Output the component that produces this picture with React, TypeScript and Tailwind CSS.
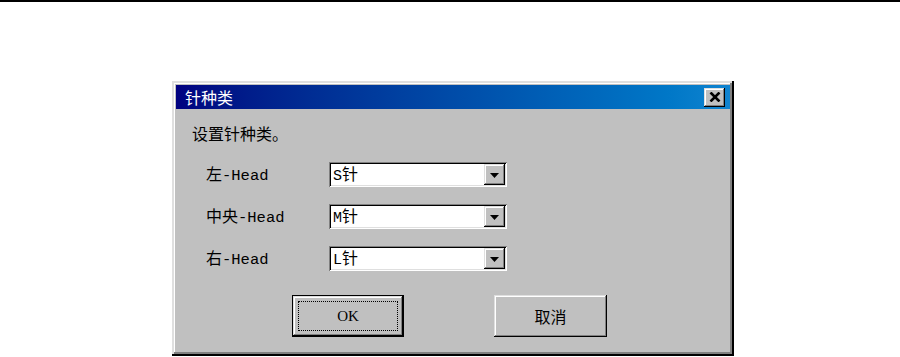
import React from "react";

const CJK = '"Noto Sans CJK SC", "Noto Sans CJK JP", sans-serif';
const MONO = '"Liberation Mono", "Noto Sans CJK SC", monospace';

const raised =
  "shadow-[inset_-1px_-1px_#000000,inset_1px_1px_#dfdfdf,inset_-2px_-2px_#808080,inset_2px_2px_#ffffff]";

function Label({ cjk }: { cjk: string }) {
  return (
    <div className="w-[123px] flex items-baseline text-black">
      <span className="text-[16px] leading-[18px]" style={{ fontFamily: CJK }}>
        {cjk}
      </span>
      <span className="text-[15.5px] leading-[18px]" style={{ fontFamily: MONO }}>
        -Head
      </span>
    </div>
  );
}

function Combo({ letter }: { letter: string }) {
  return (
    <div className="w-[178px] h-[25px] bg-white flex items-center justify-between p-[2px] shadow-[inset_1px_1px_#808080,inset_-1px_-1px_#ffffff,inset_2px_2px_#000000,inset_-2px_-2px_#dfdfdf]">
      <div className="flex items-baseline pl-[2px] text-black">
        <span className="text-[15px] leading-[18px]" style={{ fontFamily: MONO }}>
          {letter}
        </span>
        <span className="text-[16px] leading-[18px]" style={{ fontFamily: CJK }}>
          针
        </span>
      </div>
      <div className={`w-[21px] h-[21px] bg-[#c0c0c0] flex items-center justify-center ${raised}`}>
        <svg width="9" height="5" viewBox="0 0 9 5" className="mt-[1px]">
          <polygon points="0,0 9,0 4.5,5" fill="#000" />
        </svg>
      </div>
    </div>
  );
}

export default function App() {
  return (
    <div className="w-[900px] h-[357px] bg-white overflow-hidden" style={{ fontFamily: CJK }}>
      <div className="h-[2px] bg-black" />
      <div className="ml-[172px] mt-[79px] w-[562px] h-[275px] bg-[#c0c0c0] p-[4px] flex flex-col shadow-[inset_-2px_-2px_#000000,inset_2px_2px_#dfdfdf,inset_-4px_-4px_#808080,inset_3px_3px_#ffffff]">
        <div className="h-[24px] flex items-center justify-between bg-gradient-to-r from-[#000080] to-[#1084d0] pl-[9px] pr-[5px]">
          <span className="text-white text-[16px] leading-none">针种类</span>
          <div className={`w-[21px] h-[19px] bg-[#c0c0c0] flex items-center justify-center ${raised}`}>
            <svg width="12" height="10" viewBox="0 0 12 10">
              <path d="M1.5 0.5 L10.5 9.5 M10.5 0.5 L1.5 9.5" stroke="#000" strokeWidth="2.6" />
            </svg>
          </div>
        </div>
        <div className="pl-[16px] pt-[15px] flex flex-col">
          <div className="h-[18px] text-[16px] leading-[18px] text-black">设置针种类。</div>
          <div className="mt-[20px] pl-[14px] flex flex-col gap-[17px]">
            <div className="flex items-center h-[25px]">
              <Label cjk="左" />
              <Combo letter="S" />
            </div>
            <div className="flex items-center h-[25px]">
              <Label cjk="中央" />
              <Combo letter="M" />
            </div>
            <div className="flex items-center h-[25px]">
              <Label cjk="右" />
              <Combo letter="L" />
            </div>
          </div>
          <div className="mt-[24px] pl-[100px] flex items-center gap-[90px]">
            <div className="w-[112px] h-[42px] border border-black">
              <div className={`w-full h-full bg-[#c0c0c0] p-[5px] ${raised}`}>
                <div className="w-full h-full border border-dotted border-black flex items-center justify-center">
                  <span className="text-[15px] leading-none text-black" style={{ fontFamily: '"Liberation Serif", serif' }}>
                    OK
                  </span>
                </div>
              </div>
            </div>
            <div className={`w-[113px] h-[42px] bg-[#c0c0c0] flex items-center justify-center ${raised}`}>
              <span className="text-[16px] leading-none text-black">取消</span>
            </div>
          </div>
        </div>
      </div>
    </div>
  );
}
